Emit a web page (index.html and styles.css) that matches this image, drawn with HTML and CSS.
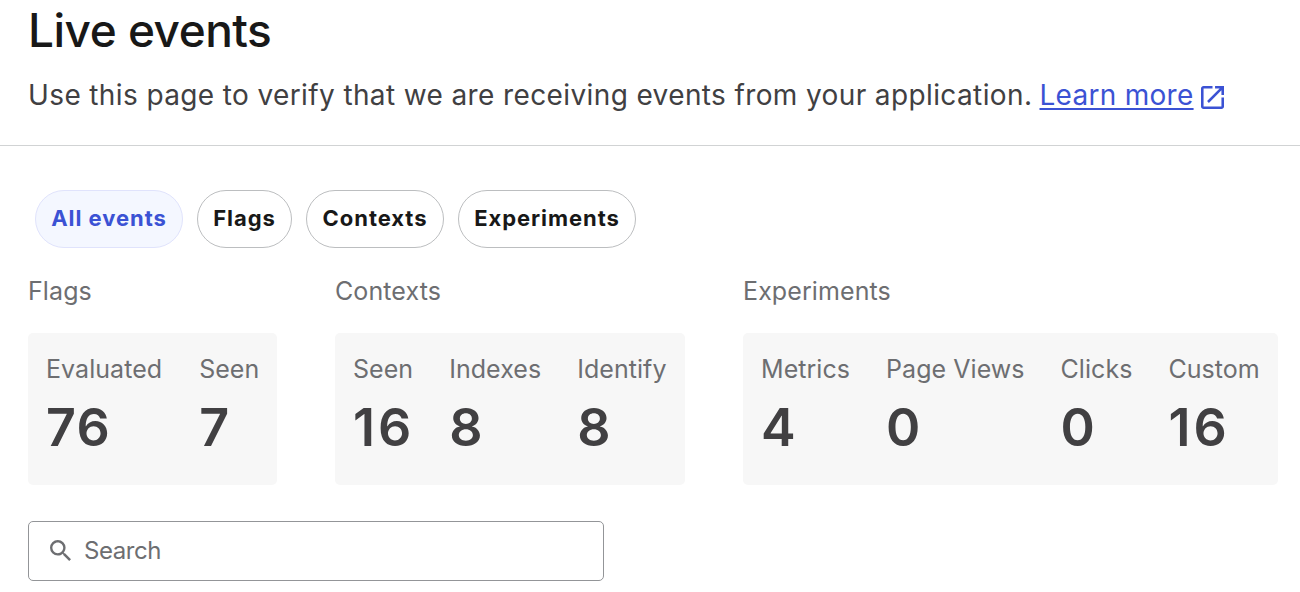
FILE: index.html
```html
<!DOCTYPE html>
<html lang="en">
<head>
<meta charset="utf-8">
<title>Live events</title>
<link rel="stylesheet" href="styles.css">
</head>
<body>
<header class="header">
  <h1 class="title">Live events</h1>
  <p class="intro"><span class="intro-text">Use this page to verify that we are receiving events from your application.</span><a class="learn" href="#">Learn more</a><svg class="external" viewBox="3 3 18 18"><path fill="currentColor" d="M19 19H5V5h7V3H5c-1.110 0-2 .9-2 2v14c0 1.100.89 2 2 2h14c1.100 0 2-.9 2-2v-7h-2v7zM14 3v2h3.590l-9.830 9.830 1.410 1.410L19 6.410V10h2V3h-7z"/></svg></p>
</header>
<main class="main">
  <nav class="filters">
    <button class="chip all active"><span>All events</span></button>
    <button class="chip flags"><span>Flags</span></button>
    <button class="chip contexts"><span>Contexts</span></button>
    <button class="chip experiments"><span>Experiments</span></button>
  </nav>
  <div class="groups">
    <section class="group group-flags">
      <h2 class="group-title">Flags</h2>
      <dl class="stats">
        <div class="stat"><dt>Evaluated</dt><dd>76</dd></div>
        <div class="stat"><dt>Seen</dt><dd>7</dd></div>
      </dl>
    </section>
    <section class="group group-contexts">
      <h2 class="group-title">Contexts</h2>
      <dl class="stats">
        <div class="stat"><dt>Seen</dt><dd class="wide">16</dd></div>
        <div class="stat"><dt>Indexes</dt><dd>8</dd></div>
        <div class="stat"><dt>Identify</dt><dd>8</dd></div>
      </dl>
    </section>
    <section class="group group-experiments">
      <h2 class="group-title">Experiments</h2>
      <dl class="stats">
        <div class="stat"><dt>Metrics</dt><dd>4</dd></div>
        <div class="stat"><dt>Page Views</dt><dd>0</dd></div>
        <div class="stat"><dt>Clicks</dt><dd>0</dd></div>
        <div class="stat"><dt>Custom</dt><dd class="wide">16</dd></div>
      </dl>
    </section>
  </div>
  <label class="search">
    <svg class="search-icon" viewBox="3 3 17.5 17.5"><path fill="currentColor" d="M15.500 14h-.79l-.28-.27A6.471 6.471 0 0 0 16 9.500 6.500 6.500 0 1 0 9.500 16c1.610 0 3.090-.59 4.230-1.570l.27.28v.79l5 4.990L20.490 19l-4.990-5zm-6 0C7.010 14 5 11.990 5 9.500S7.010 5 9.500 5 14 7.010 14 9.500 11.990 14 9.500 14z"/></svg>
    <span class="placeholder">Search</span>
  </label>
</main>
</body>
</html>
```
FILE: styles.css
```css
* { box-sizing: border-box; }
body {
  margin: 0;
  height: 592px;
  overflow: hidden;
  background: #fff;
  color: #6d6e71;
  font-family: Inter, sans-serif;
}
h1, h2, p, dl, dd { margin: 0; font-weight: 400; }
.header {
  height: 146px;
  padding-left: 28px;
  border-bottom: 1px solid #d1d3d4;
}
.title {
  padding-top: 2px;
  font-size: 46px;
  line-height: 56px;
  font-weight: 500;
  letter-spacing: -0.5px;
  color: #181818;
}
.intro {
  display: flex;
  align-items: center;
  margin-top: 17px;
  height: 40px;
  font-size: 28px;
  line-height: 40px;
  letter-spacing: 0.38px;
  color: #414042;
  white-space: nowrap;
}
.intro-text { width: 1011.5px; }
.learn {
  width: 154.5px;
  color: #3b52d4;
  text-decoration: underline;
  text-decoration-thickness: 2px;
  text-underline-offset: 3px;
  letter-spacing: 0.28px;
}
.external { width: 23px; height: 23px; margin: 4px 0 0 7px; color: #3b52d4; }
.main { padding: 44px 22px 0 28px; }
.filters { display: flex; gap: 14px; padding-left: 7px; }
.chip {
  height: 58px;
  padding: 0 0 2px;
  border: 1px solid #bcbec0;
  border-radius: 29px;
  background: #fff;
  color: #181818;
  font: 700 22px/54px Inter, sans-serif;
  letter-spacing: 0.95px;
  text-align: center;
}
.active { background: #f4f7ff; border-color: #e0e3fc; color: #3b52d4; }
.all { width: 148px; }
.flags { width: 95px; }
.contexts { width: 138px; }
.experiments { width: 178px; }
.groups { display: flex; gap: 58px; margin-top: 27px; }
.group-title { height: 32px; font-size: 25px; line-height: 32px; letter-spacing: 0.1px; }
.stats {
  display: flex;
  gap: 36px;
  height: 152px;
  margin-top: 26px;
  padding: 20px 18px;
  border-radius: 5px;
  background: #f7f7f7;
  white-space: nowrap;
}
.group-flags .stats { width: 249px; gap: 37px; }
.group-contexts .stats { width: 350px; }
.group-experiments .stats { width: 535px; }
.stat dt { font-size: 25px; line-height: 32px; letter-spacing: 0.05px; }
.stat dd {
  margin-top: 11px;
  font-size: 52px;
  line-height: 64px;
  font-weight: 600;
  font-kerning: none;
  letter-spacing: 0.5px;
  color: #414042;
}
.stat .wide { margin-right: -4px; letter-spacing: 3px; }
.search {
  display: flex;
  align-items: center;
  width: 576px;
  height: 60px;
  margin-top: 36px;
  padding-left: 21px;
  border: 1px solid #939598;
  border-radius: 5px;
}
.search-icon { width: 21px; height: 21px; margin-top: -1px; color: #6d6e71; }
.placeholder { margin-left: 13px; font-size: 24px; line-height: 32px; letter-spacing: -0.45px; }
```
